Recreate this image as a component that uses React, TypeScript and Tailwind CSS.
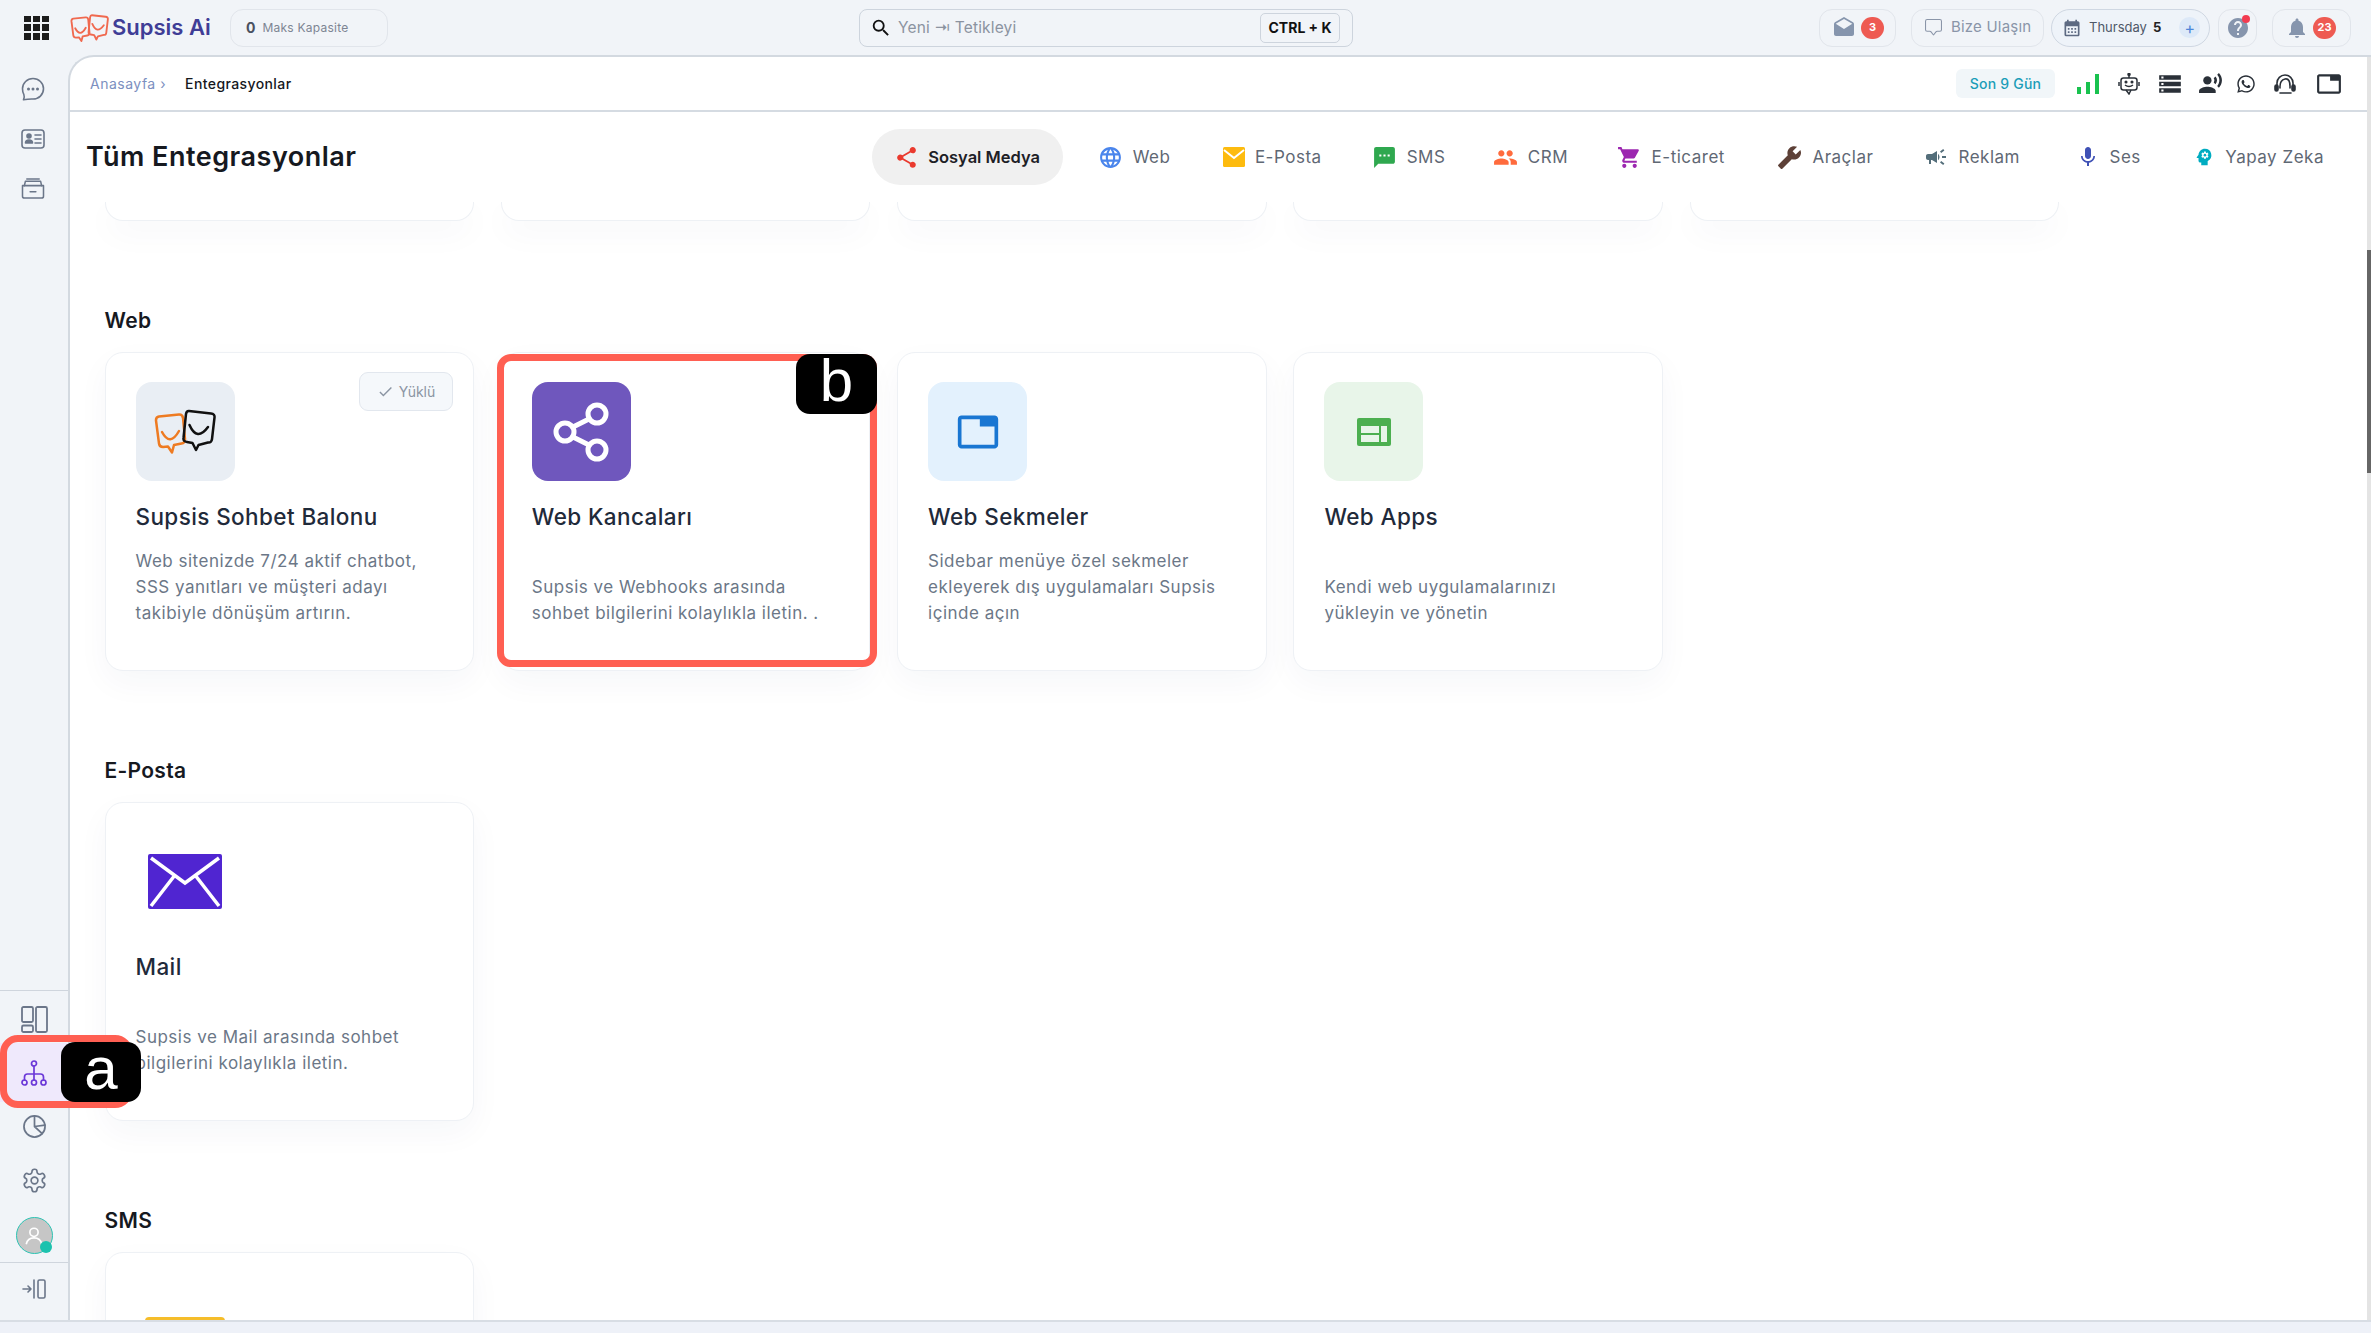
import type { ReactNode } from 'react'
import { MdShare, MdLanguage, MdSms, MdPeople, MdShoppingCart, MdBuild, MdCampaign, MdMic, MdPsychology, MdStorage, MdRecordVoiceOver, MdTab, MdCalendarMonth, MdNotifications, MdHelp, MdDrafts, MdCheck, MdSearch } from 'react-icons/md'
import { FaWhatsapp } from 'react-icons/fa'
import { BsChatSquare } from 'react-icons/bs'

const Bubbles = ({ left, right, className, width }: { left: string; right: string; className: string; width: number }) => (
  <svg viewBox="0 0 62 45" fill="none" strokeWidth={width} strokeLinecap="round" strokeLinejoin="round" className={className}>
    <path d="M5 7.500L25 5.500Q28.500 5.300 29 9L31 30Q31 34 27.500 34.500L20 36L18 43.500L14 37.500L9 38Q5.500 38 5 34.500L2 11.500Q1.800 8 5 7.500Z" stroke={left} />
    <path d="M8 23Q16 38 25 22" stroke={left} />
    <path d="M35 2L57 4.500Q61 5 60.500 8.500L58 30Q57.500 34 54 33.500L44.500 36L42 41L38.500 34L33 33Q29 32.500 29.500 29L32 5Q32.500 1.800 35 2Z" stroke={right} />
    <path d="M35.500 16Q43 33 54 18" stroke={right} />
  </svg>
)

const GridIcon = () => (
  <div className="grid w-[25px] h-[24px] grid-cols-3 gap-[2px]">
    {Array.from({ length: 9 }).map((_, i) => (
      <span key={i} className="bg-[#1c1c1c]" />
    ))}
  </div>
)

const stroke = { fill: 'none', stroke: '#6b7689', strokeWidth: 1.6, strokeLinecap: 'round' as const, strokeLinejoin: 'round' as const }

const SideChat = () => (
  <svg viewBox="0 0 24 24" className="w-[24px] h-[24px]" {...stroke}>
    <path d="M12 1.500c5.800 0 10.500 4.500 10.500 10.300S17.800 22 12 22c-2 0-4-.2-9.500.8 1-2.500 1-3.800.3-5.500C1.900 15.800 1.500 13.800 1.500 11.800 1.500 6 6.200 1.500 12 1.500z" />
    <circle cx="7.500" cy="12" r=".7" fill="#6b7689" />
    <circle cx="12" cy="12" r=".7" fill="#6b7689" />
    <circle cx="16.500" cy="12" r=".7" fill="#6b7689" />
  </svg>
)

const SideContact = () => (
  <svg viewBox="0 0 24 20" className="w-[24px] h-[20px]" {...stroke}>
    <rect x="1" y="1" width="22" height="18" rx="3" />
    <circle cx="8" cy="7" r="2" fill="#6b7689" />
    <path d="M4.500 14c0-4 7-4 7 0z" fill="#6b7689" />
    <path d="M14 6h6M14 10h6M14 14h6" />
  </svg>
)

const SideArchive = () => (
  <svg viewBox="0 0 24 22" className="w-[24px] h-[21px]" {...stroke}>
    <path d="M1 8h22v11a2 2 0 0 1-2 2H3a2 2 0 0 1-2-2z" />
    <path d="M3 8l1-4.500h16L21 8M5.500 1h13" />
    <path d="M9 14.500h6" />
  </svg>
)

const SideLayout = () => (
  <svg viewBox="0 0 27 27" className="w-[27px] h-[27px]" {...stroke} strokeWidth={1.8}>
    <rect x="1" y="1" width="11" height="15" rx="1.500" />
    <rect x="1" y="19.500" width="11" height="6.500" rx="1.500" />
    <rect x="15" y="1" width="11" height="25" rx="1.500" />
  </svg>
)

const SideNetwork = () => (
  <svg viewBox="0 0 26 26" className="w-[26px] h-[26px]" fill="none" stroke="#6b38d8" strokeWidth="1.700" strokeLinecap="round">
    <circle cx="13" cy="3.500" r="2.500" />
    <circle cx="3.500" cy="22.500" r="2.500" />
    <circle cx="13" cy="22.500" r="2.500" />
    <circle cx="22.500" cy="22.500" r="2.500" />
    <path d="M13 6v14M3.500 20v-3q0-3 3-3h13q3 0 3 3v3" />
  </svg>
)

const SidePie = () => (
  <svg viewBox="0 0 24 24" className="w-[23px] h-[23px]" {...stroke} strokeWidth={1.8}>
    <circle cx="12" cy="12" r="11" />
    <path d="M12 1v11l8 7.500M12 12l11-1.500" />
  </svg>
)

const SideGear = () => (
  <svg viewBox="0 0 24 24" className="w-[27px] h-[27px]" {...stroke} strokeWidth={1.500}>
    <path d="M12.220 2h-.44a2 2 0 0 0-2 2v.180a2 2 0 0 1-1 1.730l-.430.250a2 2 0 0 1-2 0l-.150-.080a2 2 0 0 0-2.730.730l-.220.380a2 2 0 0 0 .730 2.730l.150.100a2 2 0 0 1 1 1.720v.510a2 2 0 0 1-1 1.740l-.150.090a2 2 0 0 0-.730 2.730l.220.380a2 2 0 0 0 2.730.730l.150-.080a2 2 0 0 1 2 0l.430.250a2 2 0 0 1 1 1.730V20a2 2 0 0 0 2 2h.440a2 2 0 0 0 2-2v-.180a2 2 0 0 1 1-1.730l.430-.250a2 2 0 0 1 2 0l.150.080a2 2 0 0 0 2.730-.730l.220-.390a2 2 0 0 0-.730-2.730l-.150-.080a2 2 0 0 1-1-1.740v-.500a2 2 0 0 1 1-1.740l.150-.090a2 2 0 0 0 .730-2.730l-.220-.380a2 2 0 0 0-2.730-.730l-.150.080a2 2 0 0 1-2 0l-.430-.250a2 2 0 0 1-1-1.730V4a2 2 0 0 0-2-2z" />
    <circle cx="12" cy="12" r="3" />
  </svg>
)

const SideExit = () => (
  <svg viewBox="0 0 24 20" className="w-[24px] h-[20px]" {...stroke} strokeWidth={1.600}>
    <path d="M1 10h8M6 7l3 3-3 3" />
    <path d="M12 1h0v18" />
    <rect x="16" y="1" width="7" height="18" rx="1.500" />
  </svg>
)

const Avatar = () => (
  <div className="relative w-[37px] h-[37px] rounded-full border border-[#2cc4b4] bg-[#c6c6c6] flex items-center justify-center">
    <svg viewBox="0 0 24 24" className="w-[22px] h-[22px]" fill="none" stroke="#ffffff" strokeWidth="1.800">
      <circle cx="12" cy="8" r="4.500" />
      <path d="M3.500 21c1-5 4-7 8.500-7s7.500 2 8.500 7" />
    </svg>
    <span className="absolute right-0 bottom-0 w-[12px] h-[12px] rounded-full bg-[#1cc2ae]" />
  </div>
)

const Badge = ({ children }: { children: ReactNode }) => (
  <span className="flex h-[22px] min-w-[23px] items-center justify-center rounded-full bg-[#ee5a52] px-[3px] text-[11px] font-bold text-white">
    {children}
  </span>
)

const Pill = ({ className, children }: { className: string; children: ReactNode }) => (
  <div className={`relative flex h-[38px] items-center rounded-[13px] border border-[#e1e5eb] ${className}`}>{children}</div>
)

const Header = () => (
  <header className="flex h-[55px] shrink-0 items-center pl-[24px]">
    <GridIcon />
    <Bubbles left="#f0694f" right="#f0694f" width={3} className="ml-[21px] w-[39px] h-[28px]" />
    <span className="ml-[3px] w-[97px] whitespace-nowrap text-[22px] font-semibold text-[#3f3d96]">Supsis Ai</span>
    <Pill className="ml-[21px] w-[158px] pl-[15px]">
      <span className="text-[14px] font-bold text-[#4a5160]">0</span>
      <span className="ml-[7px] text-[12px] tracking-[0.02em] text-[#7d8593]">Maks Kapasite</span>
    </Pill>
    <div className="ml-[471px] flex h-[38px] w-[494px] items-center rounded-[8px] border border-[#cdd4dd] pl-[10px] pr-[12px]">
      <MdSearch className="text-[22px] text-[#111]" />
      <span className="ml-[6px] text-[15.500px] tracking-[0.01em] text-[#8b93a0]">Yeni ⇥ Tetikleyi</span>
      <span className="ml-auto flex h-[30px] w-[80px] items-center justify-center rounded-[5px] border border-[#cdd4dd] text-[14px] font-bold text-[#111]">CTRL + K</span>
    </div>
    <div className="ml-auto flex items-center pr-[20px]">
      <Pill className="w-[77px] pl-[12px]">
        <MdDrafts className="text-[24px] text-[#8695ad]" />
        <span className="ml-[5px]"><Badge>3</Badge></span>
      </Pill>
      <Pill className="ml-[15px] w-[133px] pl-[13px]">
        <BsChatSquare className="text-[17px] text-[#8a95a8]" />
        <span className="ml-[9px] text-[15px] tracking-[0.2px] text-[#8a95a8]">Bize Ulaşın</span>
      </Pill>
      <div className="ml-[7px] flex h-[38px] w-[159px] items-center rounded-full border border-[#cfd7e2] bg-[#eef3f9] pl-[10px]">
        <MdCalendarMonth className="text-[20px] text-[#5d6a82]" />
        <span className="ml-[7px] text-[13px] text-[#4e5868]">Thursday</span>
        <span className="ml-[6px] text-[13px] font-bold text-[#222]">5</span>
        <span className="ml-[18px] flex h-[21px] w-[21px] items-center justify-center rounded-full bg-[#dde9f8] text-[16px] leading-none text-[#4c86d9]">+</span>
      </div>
      <Pill className="ml-[8px] w-[39px] justify-center">
        <MdHelp className="text-[24px] text-[#8695ad]" />
        <span className="absolute right-[6px] top-[5px] w-[8px] h-[8px] rounded-full bg-[#f23b50]" />
      </Pill>
      <Pill className="ml-[15px] w-[79px] pl-[12px]">
        <MdNotifications className="text-[24px] text-[#8695ad]" />
        <span className="ml-[4px]"><Badge>23</Badge></span>
      </Pill>
    </div>
  </header>
)

const Sidebar = () => (
  <aside className="flex w-[68px] shrink-0 flex-col items-center">
    <div className="mt-[22px] flex flex-col items-center pr-[2px]">
      <SideChat />
      <div className="mt-[28px]"><SideContact /></div>
      <div className="mt-[29px]"><SideArchive /></div>
    </div>
    <div className="mt-auto flex w-full flex-col items-center">
      <div className="flex w-full justify-center border-t border-[#cfd5dd] pt-[15px]"><SideLayout /></div>
      <div className="mt-[10px] flex h-[59px] w-full items-center justify-center bg-[#efe9fc]"><SideNetwork /></div>
      <div className="mt-[13px]"><SidePie /></div>
      <div className="mt-[29px]"><SideGear /></div>
      <div className="mt-[23px]"><Avatar /></div>
      <div className="mt-[8px] flex h-[58px] w-full items-center justify-center border-t border-[#cfd5dd] pb-[6px]"><SideExit /></div>
    </div>
  </aside>
)

const tabs: { label: string; pad: string; icon: ReactNode }[] = [
  { label: 'Web', pad: 'pl-[25px] pr-[25px]', icon: <MdLanguage className="text-[25px] text-[#4a85ec]" /> },
  {
    label: 'E-Posta',
    pad: 'pl-[27.500px] pr-[25px]',
    icon: (
      <svg viewBox="0 0 22 20" className="w-[22px] h-[20px]">
        <rect width="22" height="20" rx="1.500" fill="#fdbb0e" />
        <path d="M1 3l10 8 10-8" fill="none" stroke="#fff" strokeWidth="2" />
      </svg>
    )
  },
  { label: 'SMS', pad: 'pl-[25px] pr-[25px]', icon: <MdSms className="text-[25px] text-[#2fa84f]" /> },
  { label: 'CRM', pad: 'pl-[22.500px] pr-[25px]', icon: <MdPeople className="text-[25px] text-[#ff6b3d]" /> },
  { label: 'E-ticaret', pad: 'pl-[23.500px] pr-[27px]', icon: <MdShoppingCart className="text-[25px] text-[#9c27b0]" /> },
  { label: 'Araçlar', pad: 'pl-[25.500px] pr-[27px]', icon: <MdBuild className="text-[25px] text-[#5d4037] -scale-x-100" /> },
  { label: 'Reklam', pad: 'pl-[24px] pr-[27px]', icon: <MdCampaign className="text-[24px] text-[#546e7a]" /> },
  { label: 'Ses', pad: 'pl-[28.500px] pr-[27px]', icon: <MdMic className="text-[24px] text-[#3f51b5]" /> },
  { label: 'Yapay Zeka', pad: 'pl-[25.500px] pr-[27px]', icon: <MdPsychology className="text-[22px] text-[#00acc1]" /> }
]

const Topline = () => (
  <div className="flex h-[55px] shrink-0 items-center border-b-2 border-[#d5dbe2] pl-[20px] pr-[25px]">
    <span className="text-[14px] tracking-[0.5px] text-[#7c8fc0]">Anasayfa ›</span>
    <span className="ml-[19px] text-[14px] font-medium tracking-[0.4px] text-[#15181d]">Entegrasyonlar</span>
    <div className="ml-auto flex items-center">
      <span className="flex h-[29px] w-[99px] items-center justify-center rounded-[6px] bg-[#f1f6f9] text-[14px] font-medium tracking-[0.2px] text-[#1b9db8]">Son 9 Gün</span>
      <svg viewBox="0 0 23 20" className="ml-[22px] w-[23px] h-[20px]" fill="#19c24f">
        <rect x="0" y="13" width="4" height="7" />
        <rect x="9" y="8" width="4" height="12" />
        <rect x="18" y="0" width="4" height="20" />
      </svg>
      <svg viewBox="0 0 22 22" className="ml-[18px] w-[22px] h-[22px]" fill="none" stroke="#2a3038" strokeWidth="1.500">
        <rect x="3" y="5" width="16" height="12" rx="2.500" />
        <path d="M11 5V2M1 9v4M21 9v4M8 17l3 4 2-4" />
        <path d="M7 12q4 3 8 0" />
        <circle cx="8" cy="9" r=".8" fill="#2a3038" />
        <circle cx="14" cy="9" r=".8" fill="#2a3038" />
        <circle cx="11" cy="1.500" r="1" fill="#2a3038" />
      </svg>
      <MdStorage className="ml-[17px] text-[26px] text-[#2a3038]" />
      <MdRecordVoiceOver className="ml-[15px] text-[25px] text-[#2a3038]" />
      <FaWhatsapp className="ml-[13px] text-[20px] text-[#2a3038]" />
      <svg viewBox="0 0 22 22" className="ml-[18px] w-[22px] h-[22px]" fill="none" stroke="#2a3038" strokeWidth="1.600" strokeLinecap="round">
        <path d="M3 13V10a8 8 0 0 1 16 0v3" />
        <path d="M6 15q-.5-8 5-9t5 9" />
        <rect x="1" y="12" width="3" height="6" rx="1.500" fill="#2a3038" />
        <rect x="18" y="12" width="3" height="6" rx="1.500" fill="#2a3038" />
        <path d="M6 20h11" />
      </svg>
      <MdTab className="ml-[20px] text-[26px] text-[#2a3038]" />
    </div>
  </div>
)

const Titlebar = () => (
  <div className="flex h-[90px] shrink-0 items-center justify-between bg-white pl-[16px] pr-[16px]">
    <h1 className="mt-[1px] text-[27px] font-semibold tracking-[0.5px] text-[#16191f]">Tüm Entegrasyonlar</h1>
    <nav className="flex items-center">
      <div className="mr-[10px] flex h-[56px] w-[191px] items-center justify-center gap-[9px] rounded-[28px] bg-[#f0f0f0]">
        <MdShare className="text-[25px] text-[#ea3a2e]" />
        <span className="text-[16.500px] font-semibold text-[#1d2026]">Sosyal Medya</span>
      </div>
      {tabs.map(t => (
        <div key={t.label} className={`flex items-center gap-[10px] ${t.pad}`}>
          {t.icon}
          <span className="mt-[2px] text-[17px] tracking-[0.03em] text-[#5f6874]">{t.label}</span>
        </div>
      ))}
    </nav>
  </div>
)

type CardData = { title: string; desc: string; icon: ReactNode; tint: string; badge?: boolean }

const Card = ({ title, desc, icon, tint, badge }: CardData) => (
  <div className="relative h-[319px] rounded-[18px] border border-[#eef1f5] bg-white pl-[30px] pr-[20px] pt-[29px] shadow-[0_12px_32px_rgba(30,50,90,0.04)]">
    {badge && (
      <span className="absolute right-[20px] top-[19px] flex h-[39px] w-[94px] items-center justify-center gap-[5px] rounded-[9px] border border-[#e2e7ee] bg-[#f5f8fb] text-[14px] text-[#8b95a3]">
        <MdCheck className="text-[17px]" />
        Yüklü
      </span>
    )}
    <div className={`flex h-[99px] w-[99px] items-center justify-center rounded-[16px] ${tint}`}>{icon}</div>
    <h3 className="mt-[21px] text-[22.500px] leading-[30px] font-[550] tracking-[0.4px] text-[#1f2a3a]">{title}</h3>
    <div className="mt-[16px] flex h-[78px] items-end">
      <p className="whitespace-pre-line text-[17px] leading-[26px] tracking-[0.5px] text-[#6b7787]">{desc}</p>
    </div>
  </div>
)

const webCards: CardData[] = [
  {
    title: 'Supsis Sohbet Balonu',
    desc: 'Web sitenizde 7/24 aktif chatbot,\nSSS yanıtları ve müşteri adayı\ntakibiyle dönüşüm artırın.',
    tint: 'bg-[#e9eef4]',
    badge: true,
    icon: <Bubbles left="#ee7b22" right="#111111" width={2.500} className="w-[62px] h-[45px]" />
  },
  {
    title: 'Web Kancaları',
    desc: 'Supsis ve Webhooks arasında\nsohbet bilgilerini kolaylıkla iletin. .',
    tint: 'bg-[#6f57bd]',
    icon: (
      <svg viewBox="0 0 60 64" className="w-[60px] h-[64px]" fill="none" stroke="#fff" strokeWidth="5">
        <circle cx="46" cy="14" r="9" />
        <circle cx="14" cy="32" r="9" />
        <circle cx="46" cy="50" r="9" />
        <path d="M38 19L22 27M22 37l16 8" />
      </svg>
    )
  },
  {
    title: 'Web Sekmeler',
    desc: 'Sidebar menüye özel sekmeler\nekleyerek dış uygulamaları Supsis\niçinde açın',
    tint: 'bg-[#e3f1fd]',
    icon: <MdTab className="text-[44px] text-[#1976d2]" />
  },
  {
    title: 'Web Apps',
    desc: 'Kendi web uygulamalarınızı\nyükleyin ve yönetin',
    tint: 'bg-[#e8f5e9]',
    icon: (
      <svg viewBox="0 0 34 28" className="w-[34px] h-[28px]">
        <rect width="34" height="28" rx="2" fill="#4caf50" />
        <rect x="4" y="8" width="18" height="7" fill="#e8f5e9" />
        <rect x="4" y="17" width="18" height="7" fill="#e8f5e9" />
        <rect x="24" y="8" width="6" height="16" fill="#e8f5e9" />
      </svg>
    )
  }
]

const mailCard: CardData = {
  title: 'Mail',
  desc: 'Supsis ve Mail arasında sohbet\nbilgilerini kolaylıkla iletin.',
  tint: 'bg-white',
  icon: (
    <svg viewBox="0 0 74 55" className="w-[74px] h-[55px]">
      <rect width="74" height="55" rx="2" fill="#5025d1" />
      <path d="M3 4l34 25L71 4M3 52l24-31M71 52L47 21" fill="none" stroke="#fff" strokeWidth="3.500" />
    </svg>
  )
}

const Section = ({ title, children }: { title: string; children: ReactNode }) => (
  <section className="mb-[88px]">
    <h2 className="mb-[19px] text-[21px] leading-[24px] font-semibold tracking-[0.3px] text-[#16191f]">{title}</h2>
    <div className="grid grid-cols-[repeat(5,369.500px)] gap-x-[26.800px]">{children}</div>
  </section>
)

const Content = () => (
  <div className="min-h-0 flex-1 overflow-hidden pl-[34.500px]">
    <div className="mb-[88px] grid grid-cols-[repeat(5,369.500px)] gap-x-[26.800px]">
      {[0, 1, 2, 3, 4].map(i => (
        <div key={i} className="h-[19px] rounded-b-[18px] border border-t-0 border-[#eef1f5] bg-white shadow-[0_12px_32px_rgba(30,50,90,0.04)]" />
      ))}
    </div>
    <Section title="Web">
      {webCards.map(c => (
        <Card key={c.title} {...c} />
      ))}
    </Section>
    <Section title="E-Posta">
      <Card {...mailCard} />
    </Section>
    <Section title="SMS">
      <div className="h-[319px] rounded-[18px] border border-[#eef1f5] bg-white pl-[39px] pt-[64px] shadow-[0_12px_32px_rgba(30,50,90,0.04)]">
        <div className="h-[4px] w-[80px] rounded-t-[4px] bg-[#f5bd2a]" />
      </div>
    </Section>
  </div>
)

export default function App() {
  return (
    <div className="relative flex h-[1333px] w-[2371px] flex-col overflow-hidden bg-[#f1f4f8] font-[Inter,'Noto_Sans',sans-serif]">
      <Header />
      <div className="flex min-h-0 flex-1">
        <Sidebar />
        <main className="flex min-w-0 flex-1 overflow-hidden rounded-tl-[26px] border-l-2 border-t-2 border-[#d3d9e0] bg-white">
          <div className="flex min-w-0 flex-1 flex-col">
            <Topline />
            <Titlebar />
            <Content />
          </div>
          <div className="w-[4px] shrink-0 bg-[#e4e4e4] pt-[193px]">
            <div className="h-[223px] bg-[#666666]" />
          </div>
        </main>
      </div>
      <div className="h-[13px] shrink-0 border-t-2 border-[#d8dde4] bg-[#eef1f8]" />

      {/* annotation overlays */}
      <div className="absolute left-0 top-[1035px] h-[73px] w-[133px] rounded-[18px] border-[7px] border-[#ff5f52]" />
      <div className="absolute left-[61px] top-[1042px] flex h-[60px] w-[80px] items-center justify-center rounded-[14px] bg-black pb-[6px] font-['Liberation_Sans',sans-serif] text-[60px] text-white">a</div>
      <div className="absolute left-[497px] top-[354px] h-[313px] w-[380px] rounded-[14px] border-[7px] border-[#ff5f52]" />
      <div className="absolute left-[796px] top-[354px] flex h-[60px] w-[81px] items-center justify-center rounded-[14px] bg-black pb-[6px] font-['Liberation_Sans',sans-serif] text-[60px] text-white">b</div>
    </div>
  )
}
